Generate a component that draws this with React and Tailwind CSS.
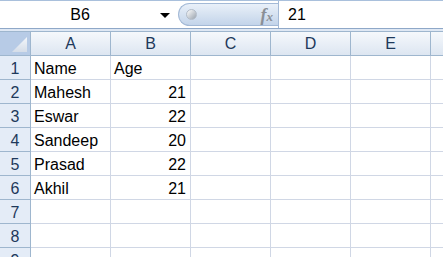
const cols = ["A", "B", "C", "D", "E", ""];

const rows = [
  ["Name", "Age"],
  ["Mahesh", 21],
  ["Eswar", 22],
  ["Sandeep", 20],
  ["Prasad", 22],
  ["Akhil", 21],
  ["", ""],
  ["", ""],
  ["", ""],
];

function FormulaBar() {
  return (
    <div className="flex h-[29px] border-t border-b border-t-[#a9c0dc] border-b-[#8fa8c8] bg-white">
      {/* name box */}
      <div className="relative flex w-[178px] items-center justify-center">
        <span className="pr-[18px] text-[16px] text-black">B6</span>
        <svg className="absolute right-[8px] top-[12px]" width="10" height="6" viewBox="0 0 10 6">
          <path d="M0 0h10L5 5z" fill="#000" />
        </svg>
      </div>
      {/* grip + fx */}
      <div className="my-[2px] flex w-[100px] items-center rounded-l-full border border-r-0 border-[#a3b9d6] bg-gradient-to-b from-[#e9f0f9] via-[#d6e2f1] to-[#c3d4ea] pl-[7px] pr-[5px]">
        <div className="h-[11px] w-[11px] rounded-full border border-[#b3bcc8] bg-gradient-to-br from-[#ffffff] to-[#9aa3ae]" />
        <span className="ml-auto font-['Liberation_Serif',serif] text-[18px] font-bold italic leading-none text-[#8a8f96]">
          f<span className="text-[13px]">x</span>
        </span>
      </div>
      <div className="flex flex-1 items-center border-l border-[#a3b9d6] pl-[9px]">
        <span className="text-[16px] text-black">21</span>
      </div>
    </div>
  );
}

export default function App() {
  return (
    <div className="h-[257px] w-[443px] overflow-hidden bg-white font-['Liberation_Sans',Arial,sans-serif]">
      <FormulaBar />
      <div className="h-[2px] bg-[#dfe8f4]" />
      <div className="grid grid-cols-[31px_repeat(6,80px)]">
        {/* corner */}
        <div className="relative h-[25px] border-r border-b border-t border-[#9eb6ce] bg-[#b7cbe6]">
          <svg className="absolute bottom-[3px] right-[3px]" width="15" height="15" viewBox="0 0 15 15">
            <defs>
              <linearGradient id="tri" x1="0" y1="0" x2="0" y2="1">
                <stop offset="0" stopColor="#f4f7fb" />
                <stop offset="1" stopColor="#d5dde8" />
              </linearGradient>
            </defs>
            <path d="M15 0V15H0z" fill="url(#tri)" />
          </svg>
        </div>
        {cols.map((c, i) => (
          <div
            key={i}
            className="flex h-[25px] items-center justify-center border-r border-b border-t border-[#9eb6ce] bg-gradient-to-b from-[#f5f8fc] to-[#dde6f1] text-[16px] text-[#1e395b]"
          >
            {c}
          </div>
        ))}

        {rows.map((r, i) => (
          <Row key={i} n={i + 1} cells={r} />
        ))}
      </div>
    </div>
  );
}

function Row({ n, cells }) {
  return (
    <>
      <div className="flex h-[24px] items-end justify-center border-r border-b border-r-[#9eb6ce] border-b-[#9eb6ce] bg-[#e4ecf7] text-[16px] leading-[20px] text-[#1e395b]">
        {n}
      </div>
      {cols.map((c, j) => {
        const v = cells[j];
        const isNum = typeof v === "number";
        return (
          <div
            key={j}
            className={`flex h-[24px] items-end border-r border-b border-[#d0d7e5] text-[16px] leading-[20px] text-black ${
              isNum ? "justify-end pr-[4px]" : "justify-start pl-[3px]"
            }`}
          >
            {v ?? ""}
          </div>
        );
      })}
    </>
  );
}
